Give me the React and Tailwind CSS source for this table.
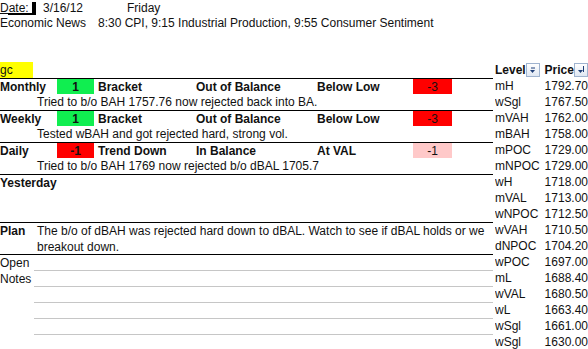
import React from "react";

const LEVELS = [
  ["mH", "1792.70"],
  ["wSgl", "1767.50"],
  ["mVAH", "1762.00"],
  ["mBAH", "1758.00"],
  ["mPOC", "1729.00"],
  ["mNPOC", "1729.00"],
  ["wH", "1718.00"],
  ["mVAL", "1713.00"],
  ["wNPOC", "1712.50"],
  ["wVAH", "1710.50"],
  ["dNPOC", "1704.20"],
  ["wPOC", "1697.00"],
  ["mL", "1688.40"],
  ["wVAL", "1680.50"],
  ["wL", "1663.40"],
  ["wSgl", "1661.00"],
  ["wSgl", "1630.00"],
];

const SECTIONS = [
  {
    label: "Monthly",
    score: "1",
    scoreCls: "bg-[#10ee50] font-bold",
    type: "Bracket",
    balance: "Out of Balance",
    where: "Below Low",
    val: "-3",
    valCls: "bg-[#ff0000]",
    note: "Tried to b/o BAH 1757.76 now rejected back into BA.",
  },
  {
    label: "Weekly",
    score: "1",
    scoreCls: "bg-[#10ee50] font-bold",
    type: "Bracket",
    balance: "Out of Balance",
    where: "Below Low",
    val: "-3",
    valCls: "bg-[#ff0000]",
    note: "Tested wBAH and got rejected hard, strong vol.",
  },
  {
    label: "Daily",
    score: "-1",
    scoreCls: "bg-[#ff0000] font-bold",
    type: "Trend Down",
    balance: "In Balance",
    where: "At VAL",
    val: "-1",
    valCls: "bg-[#ffc9c9]",
    note: "Tried to b/o BAH 1769 now rejected b/o dBAL 1705.7",
  },
];

// small excel autofilter button
function FilterBtn({ sort }) {
  return (
    <span className="flex h-[14px] w-[14px] shrink-0 items-center justify-center border border-[#9fb3cf] bg-gradient-to-b from-white to-[#dfe7f2]">
      <svg width="10" height="10" viewBox="0 0 10 10">
        {sort && <path d="M7.5 1v6" stroke="#1f3f78" strokeWidth="1" />}
        <path d="M2 5h5l-2.5 3z" fill="#1f3f78" />
        {!sort && <path d="M3 3h4" stroke="#1f3f78" strokeWidth="1" />}
      </svg>
    </span>
  );
}

function Section({ s }) {
  return (
    <>
      <div className="flex h-4 border-t border-black">
        <span className="w-[57px] font-bold">{s.label}</span>
        <span className={`w-[37px] text-center ${s.scoreCls}`}>{s.score}</span>
        <span className="w-[102px] pl-[4px] font-bold">{s.type}</span>
        <span className="w-[121px] font-bold">{s.balance}</span>
        <span className="w-[96px] font-bold">{s.where}</span>
        <span className={`w-[39px] text-center ${s.valCls}`}>{s.val}</span>
      </div>
      <div className="h-4 pl-[37px] whitespace-nowrap">{s.note}</div>
    </>
  );
}

export default function App() {
  return (
    <div className="h-[349px] w-[588px] overflow-hidden bg-white font-['Liberation_Sans',Arial,sans-serif] text-[12px] leading-4 text-[#111]">
      {/* header rows */}
      <div className="flex h-[15px] items-center whitespace-nowrap">
        <span className="relative w-[43px] self-stretch">
          <span className="underline">Date:</span>
          <span className="absolute bottom-0 left-[8px] h-[2px] w-[26px] bg-black" />
          <span className="absolute right-[7px] top-[2px] h-[13px] w-[4px] bg-black" />
        </span>
        <span className="w-[84px]">3/16/12</span>
        <span>Friday</span>
      </div>
      <div className="flex h-[15px] items-center whitespace-nowrap">
        <span className="w-[98px]">Economic News</span>
        <span>8:30 CPI, 9:15 Industrial Production, 9:55 Consumer Sentiment</span>
      </div>
      <div className="h-8" />

      <div className="flex">
        {/* left sheet */}
        <div className="w-[493px]">
          <div className="h-4">
            <span className="block h-4 w-[33px] bg-[#ffff00]">gc</span>
          </div>
          {SECTIONS.map((s) => (
            <Section key={s.label} s={s} />
          ))}
          <div className="h-4 border-t border-black font-bold">Yesterday</div>
          <div className="h-8" />
          <div className="flex h-8 border-t border-black">
            <span className="w-[37px] font-bold">Plan</span>
            <span className="whitespace-nowrap">
              The b/o of dBAH was rejected hard down to dBAL. Watch to see if dBAL holds or we
              <br />
              breakout down.
            </span>
          </div>
          <div className="border-t border-black">
            {["Open", "Notes", "", "", "", ""].map((t, i) => (
              <div key={i} className="flex h-4">
                <span className="w-[34px]">{t}</span>
                <span
                  className={`flex-1 ${i < 5 ? "border-b border-[#c6c6c6]" : ""}`}
                />
              </div>
            ))}
          </div>
        </div>

        {/* level table */}
        <div className="ml-[2px] w-[93px] overflow-hidden whitespace-nowrap">
          <div className="flex h-4 items-center font-bold">
            <span className="w-[33px]">Level</span>
            <FilterBtn />
            <span className="ml-[4px] w-[31px]">Price</span>
            <FilterBtn sort />
          </div>
          {LEVELS.map(([lvl, price], i) => (
            <div key={i} className="flex h-4">
              <span className="w-[51px]">{lvl}</span>
              <span>{price}</span>
            </div>
          ))}
        </div>
      </div>
    </div>
  );
}
